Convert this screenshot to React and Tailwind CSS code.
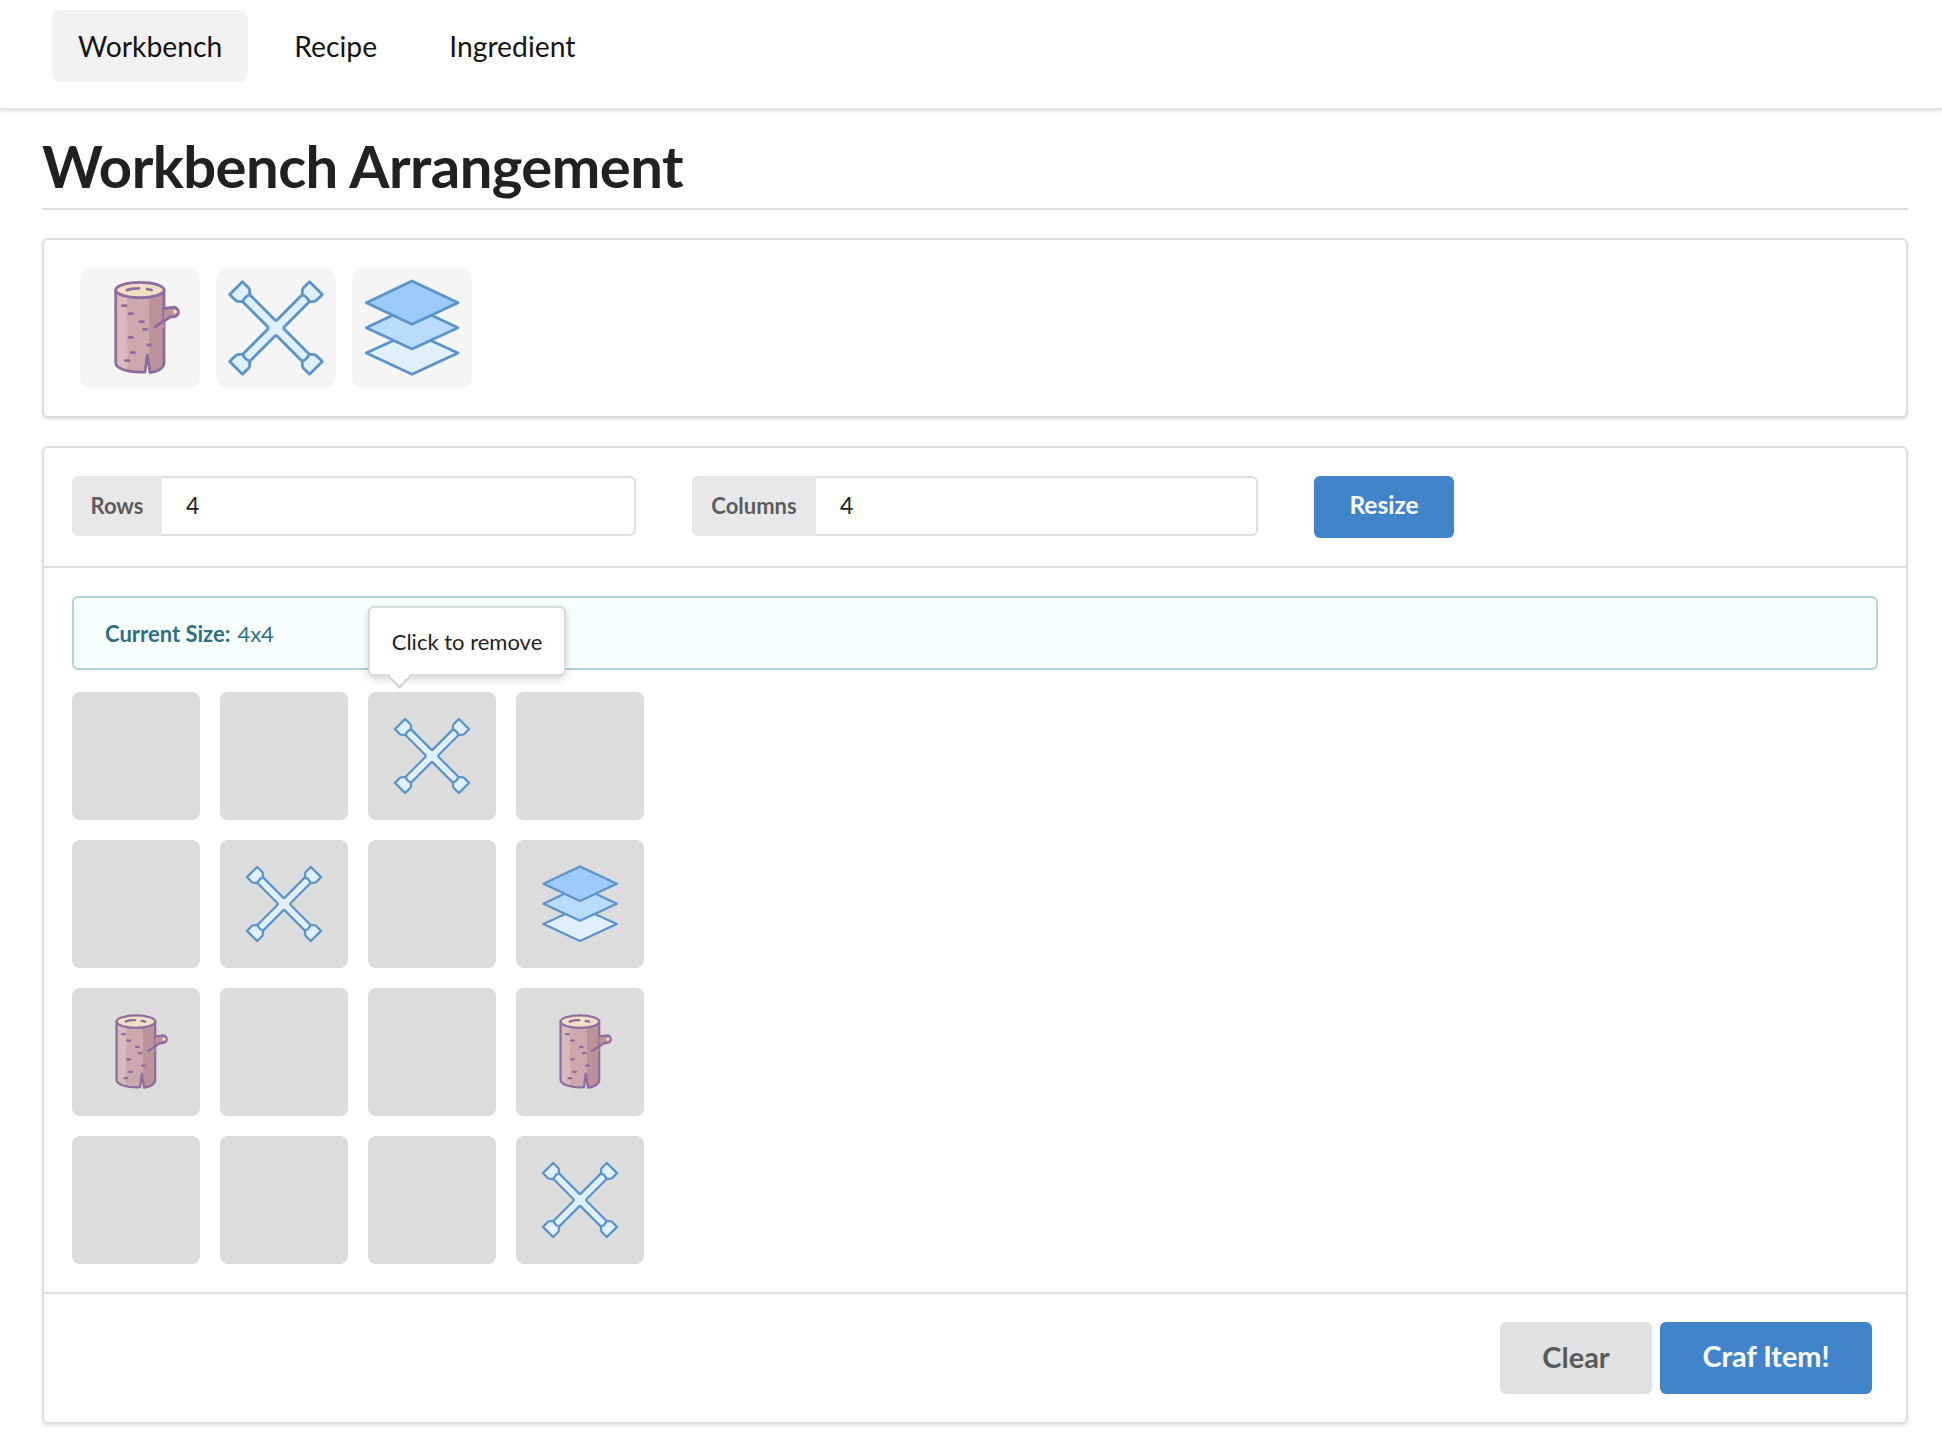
import React from "react";

const strokeBlue = "#5a94ca";

// log, drawn on a 120 box
const LogIcon = () => (
  <svg viewBox="0 0 120 120" className="w-full h-full">
    <defs>
      <clipPath id="logBody">
        <path d="M35.7 22V95C36 101 50 105 65 104L67.3 87L70 104.5C76 104 84 101 84 95V22Z" />
      </clipPath>
    </defs>
    <g clipPath="url(#logBody)">
      <rect x="35" y="14" width="13" height="95" fill="#d8b9bc" />
      <rect x="47.3" y="14" width="21" height="95" fill="#cca8ae" />
      <rect x="68.3" y="14" width="18" height="95" fill="#bc929a" />
    </g>
    <path d="M35.7 22V95C36 101 50 105 65 104L67.3 87L70 104.5C76 104 84 101 84 95V22" fill="none" stroke="#8d6c9f" strokeWidth="2.8" strokeLinejoin="round" />
    <ellipse cx="59.9" cy="22" rx="24.2" ry="7.7" fill="#f0dfc4" stroke="#8d6c9f" strokeWidth="2.8" />
    <path d="M84 40.5L91.7 39.5C95 38.5 98.5 40.5 98.5 44C98.5 47.5 94.5 49.5 91 48L75 58.7L80 60L84 60Z" fill="#bc929a" />
    <path d="M84 40.5L91.7 39.5C95 38.5 98.5 40.5 98.5 44C98.5 47.5 94.5 49.5 91 48.5L75 58.7" fill="none" stroke="#8d6c9f" strokeWidth="2.8" strokeLinejoin="round" strokeLinecap="round" />
    <circle cx="95" cy="43.8" r="2" fill="#f0dfc4" />
    <g stroke="#8d6c9f" strokeWidth="2.8" strokeLinecap="round" fill="none">
      <path d="M47 22C50 20.8 54 20.3 59 20.3" />
      <path d="M67 21L71.5 22" />
      <path d="M42.5 37.7H46" />
      <path d="M49 45.7H52.5" />
      <path d="M60 53.7H63.5" />
      <path d="M63.5 61.3H67" />
      <path d="M49 69.3H52.5" />
      <path d="M67.5 77H71" />
      <path d="M51.5 84.7H55" />
      <path d="M45.5 92.7H49" />
    </g>
  </svg>
);

// four-way wrench, one arm rotated four times
const CrossIcon = () => (
  <svg viewBox="0 0 120 120" className="w-full h-full">
    <g transform="translate(60 60)">
      {[45, 135, 225, 315].map((deg) => (
        <g key={deg} transform={`rotate(${deg})`}>
          <path
            d="M0 0L-5 -5H-42C-44 -6.5 -45.5 -9 -47.5 -9H-56.5V9H-47.5C-45.5 9 -44 6.5 -42 5H-5Z"
            fill="#e0f0fe"
          />
          <path
            d="M-5 -5H-42C-44 -6.5 -45.5 -9 -47.5 -9H-56.5V9H-47.5C-45.5 9 -44 6.5 -42 5H-5"
            fill="none"
            stroke={strokeBlue}
            strokeWidth="2.8"
            strokeLinejoin="round"
          />
          <path d="M-42 -5C-43.5 -2 -43.5 2 -42 5" fill="none" stroke={strokeBlue} strokeWidth="2.8" />
        </g>
      ))}
    </g>
  </svg>
);

const LayersIcon = () => (
  <svg viewBox="0 0 120 120" className="w-full h-full">
    <g stroke={strokeBlue} strokeWidth="2.8" strokeLinejoin="round">
      <path d="M60 64L106 85L60 106.3L14.3 85Z" fill="#e0f0fe" />
      <path d="M60 38L106 59.7L60 81L14.3 59.7Z" fill="#b9dcfd" />
      <path d="M60 13L106 34.7L60 56.3L14.3 34.7Z" fill="#9ccbfa" />
    </g>
  </svg>
);

const icons = { log: LogIcon, cross: CrossIcon, layers: LayersIcon };

const grid = [
  [null, null, "cross", null],
  [null, "cross", null, "layers"],
  ["log", null, null, "log"],
  [null, null, null, "cross"],
];

const panel = "border-2 border-[#dededf] rounded-[6px] shadow-[0_2px_3px_rgba(34,36,38,0.12)] bg-white";

export default function App() {
  return (
    <div className="min-h-[1456px] bg-white text-[#1f1f1f] font-['Lato','Liberation_Sans',sans-serif]">
      {/* Top nav */}
      <nav className="h-[109px] flex items-start gap-[20px] pl-[52px] pt-[10px] border-b border-[#e2e2e3] shadow-[0_2px_3px_rgba(34,36,38,0.15)]">
        <a className="h-[72px] flex items-center px-[26px] rounded-[8px] bg-[#f2f2f2] text-[28.3px] text-[#141414]">Workbench</a>
        <a className="h-[72px] flex items-center px-[26px] text-[28.3px] text-[#141414]">Recipe</a>
        <a className="h-[72px] flex items-center px-[26px] text-[28.3px] text-[#141414]">Ingredient</a>
      </nav>

      <main className="pl-[42px] pr-[34px]">
        <h1 className="h-[101px] pt-[24px] border-b-2 border-[#dededf] text-[58px] leading-[66px] font-bold text-[#212121] tracking-[-0.55px]">
          Workbench Arrangement
        </h1>

        {/* Palette */}
        <section className={`${panel} mt-[28px] h-[180px] pt-[28px] pl-[36px] flex gap-[16px]`}>
          {["log", "cross", "layers"].map((name) => {
            const Icon = icons[name];
            return (
              <div key={name} className="w-[120px] h-[120px] rounded-[10px] bg-[#f5f5f5]">
                <Icon />
              </div>
            );
          })}
        </section>

        {/* Workbench */}
        <section className={`${panel} mt-[28px]`}>
          <div className="h-[120px] pt-[28px] pl-[28px] flex items-start border-b-2 border-[#dededf]">
            <div className="w-[564px] h-[60px] flex">
              <span className="w-[90px] pb-[2px] flex items-center justify-center rounded-l-[6px] bg-[#e8e8e8] text-[#5c5c5c] text-[22px] font-bold">Rows</span>
              <div className="flex-1 flex items-center pl-[24px] pb-[2px] border-2 border-l-0 border-[#dededf] rounded-r-[6px] text-[23px] text-[#222]">4</div>
            </div>
            <div className="ml-[56px] w-[566px] h-[60px] flex">
              <span className="w-[124px] pb-[2px] flex items-center justify-center rounded-l-[6px] bg-[#e8e8e8] text-[#5c5c5c] text-[22px] font-bold">Columns</span>
              <div className="flex-1 flex items-center pl-[24px] pb-[2px] border-2 border-l-0 border-[#dededf] rounded-r-[6px] text-[23px] text-[#222]">4</div>
            </div>
            <button className="ml-[56px] w-[140px] h-[62px] pb-[3px] rounded-[6px] bg-[#4284ca] text-white text-[24.5px] font-bold">Resize</button>
          </div>

          <div className="relative pt-[28px] px-[28px] pb-[28px] border-b-2 border-[#dededf]">
            <div className="h-[74px] flex items-center pl-[31px] rounded-[6px] border-2 border-[#b2d3dc] bg-[#f8ffff] text-[#2f6f86] text-[22px]">
              <span className="font-bold mr-[7px]">Current Size:</span>4x4
            </div>

            {/* Tooltip */}
            <div className="absolute left-[324px] top-[38px] w-[198px] h-[70px] flex items-center justify-center rounded-[6px] border-2 border-[#d9d9da] bg-white text-[22px] text-[#222] shadow-[0_3px_8px_rgba(34,36,38,0.2)] z-10">
              Click to remove
              <span className="absolute left-[21px] bottom-[-11px] w-[17px] h-[17px] rotate-45 border-r-2 border-b-2 border-[#d0d0d1] bg-white" />
            </div>

            <div className="mt-[22px] grid grid-cols-[repeat(4,128px)] gap-y-[20px] gap-x-[20px]">
              {grid.flat().map((name, i) => {
                const Icon = name ? icons[name] : null;
                return (
                  <div key={i} className="w-[128px] h-[128px] flex items-center justify-center rounded-[8px] bg-[#dcdcdc]">
                    {Icon && (
                      <div className="w-[96px] h-[96px]">
                        <Icon />
                      </div>
                    )}
                  </div>
                );
              })}
            </div>
          </div>

          <div className="pt-[28px] pb-[28px] pr-[34px] flex justify-end gap-[8px]">
            <button className="w-[152px] h-[72px] pb-[2px] rounded-[6px] bg-[#e0e1e2] text-[#5a5a5a] text-[29px] font-bold">Clear</button>
            <button className="w-[212px] h-[72px] pb-[2px] rounded-[6px] bg-[#4284ca] text-white text-[28.8px] font-bold">Craf Item!</button>
          </div>
        </section>
      </main>
    </div>
  );
}
